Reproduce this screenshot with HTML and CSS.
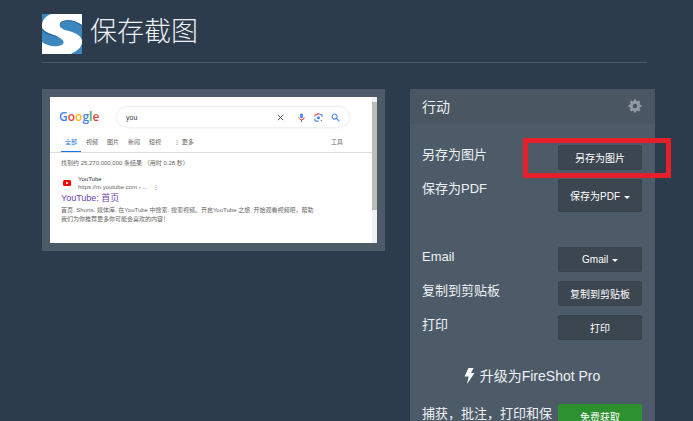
FILE: index.html
```html
<!DOCTYPE html>
<html lang="zh-CN">
<head>
  <meta charset="utf-8">
  <title>保存截图</title>
  <link rel="stylesheet" href="styles.css">
</head>
<body>
  <header class="page-header">
    <svg class="logo" viewBox="0 0 40 40">
      <rect width="40" height="40" fill="#fff"/>
      <path d="M0 0H9C4 2 1 5 0 10Z" fill="#3d87c0"/>
      <path d="M40 11C33 6 24 5 19 8C16 11 18 14 23 16C31 18 38 20 40 26Z" fill="#3d87c0"/>
      <path d="M0 14C4 20 12 20 18 24C24 28 22 31 16 32C10 33 4 31 0 28Z" fill="#3d87c0"/>
      <path d="M40 29V40H29C35 37 39 34 40 29Z" fill="#3d87c0"/>
      <path d="M18 10C22 5 33 6 40 13V11C33 6 24 5 19 8ZM0 14C4 20 12 20 18 24C13 22 4 22 0 16Z" fill="#2f6c9f"/>
    </svg>
    <h1>保存截图</h1>
  </header>

  <main class="content">
    <section class="preview">
      <div class="shot">
        <div class="shot-page">
          <div class="shot-search">
            <div class="google"><span class="b">G</span><span class="r">o</span><span class="y">o</span><span class="b">g</span><span class="g">l</span><span class="r">e</span></div>
            <div class="search-box">
              <span class="query">you</span>
              <svg class="icon" viewBox="0 0 10 10"><path d="M2 2L8 8M8 2L2 8" stroke="#555" stroke-width="1.1"/></svg>
              <svg class="icon icon-mic" viewBox="0 0 10 10"><rect x="3.5" y="0.5" width="3" height="5.5" rx="1.5" fill="#4285f4"/><path d="M2 4.5A3 3 0 0 0 5 7.6" stroke="#d9773a" fill="none"/><path d="M8 4.5A3 3 0 0 1 5 7.6" stroke="#ea4335" fill="none"/><path d="M5 7.500V10" stroke="#4c8a8a" stroke-width="1.200"/></svg>
              <svg class="icon" viewBox="0 0 10 10" fill="none" stroke-width="1.2"><path d="M1 4V2.8Q1 2 2 2H3L4 1H6" stroke="#ea4335"/><path d="M6 1L7 2H8Q9 2 9 3V4.5" stroke="#4285f4"/><path d="M1 6V8Q1 9 2 9H5" stroke="#4285f4"/><circle cx="5" cy="5.3" r="1.7" fill="#4285f4"/><circle cx="8.2" cy="8.3" r=".8" fill="#34a853"/></svg>
              <svg class="icon" viewBox="0 0 10 10" fill="none" stroke="#4285f4" stroke-width="1.2"><circle cx="4" cy="4" r="2.8"/><path d="M6 6L9.3 9.3"/></svg>
            </div>
          </div>
          <nav class="tabs">
            <a href="#" class="active">全部</a>
            <a href="#">视频</a>
            <a href="#">图片</a>
            <a href="#">新闻</a>
            <a href="#">短视</a>
            <a href="#" class="more">⋮ 更多</a>
            <a href="#" class="tools">工具</a>
          </nav>
          <div class="results">
            <p class="stats">找到约 25,270,000,000 条结果 （用时 0.28 秒）</p>
            <div class="site">
              <svg class="yt" viewBox="0 0 8 8"><rect y="1" width="8" height="6" rx="1.5" fill="#e00"/><path d="M3.2 2.6L5.6 4L3.2 5.4Z" fill="#fff"/></svg>
              <div>
                <p class="site-name">YouTube</p>
                <p class="site-url">https://m.youtube.com › ... <span class="dots">⋮</span></p>
              </div>
            </div>
            <a href="#" class="result-title">YouTube: 首页</a>
            <p class="desc">首页. Shorts. 媒体库. 在YouTube 中搜索. 搜索视频。开启YouTube 之旅. 开始观看视频吧，帮助<br>我们为你推荐更多你可能会喜欢的内容！</p>
          </div>
        </div>
        <div class="scrollbar"><div class="thumb"></div></div>
      </div>
    </section>

    <section class="actions">
      <div class="actions-header">
        <h2>行动</h2>
        <svg class="gear" viewBox="0 0 16 16"><g fill="#919aa3"><circle cx="8" cy="8" r="5.6"/><path id="tooth" d="M6.3 3L6.8 .5H9.2L9.7 3V13L9.2 15.5H6.8L6.3 13Z"/><use href="#tooth" transform="rotate(45 8 8)"/><use href="#tooth" transform="rotate(90 8 8)"/><use href="#tooth" transform="rotate(135 8 8)"/></g><circle cx="8" cy="8" r="2.7" fill="#4a5662"/></svg>
      </div>
      <div class="actions-body">
        <div class="row highlighted">
          <label for="save-image">另存为图片</label>
          <button id="save-image">另存为图片</button>
        </div>
        <div class="row row-pdf">
          <label for="save-pdf">保存为PDF</label>
          <button id="save-pdf" class="tall">保存为PDF <span class="caret"></span></button>
        </div>
        <div class="row">
          <label for="email">Email</label>
          <button id="email">Gmail <span class="caret"></span></button>
        </div>
        <div class="row">
          <label for="copy">复制到剪贴板</label>
          <button id="copy">复制到剪贴板</button>
        </div>
        <div class="row">
          <label for="print">打印</label>
          <button id="print">打印</button>
        </div>
        <h3 class="upgrade">
          <svg class="bolt" viewBox="0 0 10 16"><path d="M4 0H9L6.5 5H10L2.5 16L4.2 8.5H0Z" fill="#fff"/></svg>
          升级为FireShot Pro
        </h3>
        <div class="row">
          <label for="get-pro">捕获，批注，打印和保存</label>
          <button id="get-pro" class="green">免费获取</button>
        </div>
      </div>
    </section>
  </main>
</body>
</html>
```
FILE: styles.css
```css
* {
  box-sizing: border-box;
}
body {
  margin: 0;
  height: 100vh;
  overflow: hidden;
  padding: 12px 38px 0 42px;
  background: #2c3c4d;
  color: #eef1f4;
  font-family: "Liberation Sans", "Noto Sans CJK SC", sans-serif;
  font-size: 13px;
}
h1, h2, h3, p {
  margin: 0;
  font-weight: normal;
}
a {
  color: inherit;
  text-decoration: none;
}

.page-header {
  display: flex;
  gap: 8px;
  height: 51px;
  margin-right: 8px;
  border-bottom: 1px solid #4a5a6b;
}
.logo {
  width: 40px;
  height: 40px;
  margin-top: 2px;
}
.page-header h1 {
  font-size: 27px;
  font-weight: 300;
  line-height: 40px;
}

.content {
  display: flex;
  align-items: flex-start;
  gap: 25px;
  margin-top: 26px;
}

/* screenshot preview */
.preview {
  flex: 1;
  min-width: 0;
  padding: 8px;
  background: #4d5b69;
}
.shot {
  display: flex;
  height: 146px;
  background: #fff;
  color: #666;
  font-size: 6px;
  line-height: 9px;
  white-space: nowrap;
  overflow: hidden;
}
.shot-page {
  flex: 1;
  min-width: 0;
}
.shot-search {
  display: flex;
  align-items: center;
  gap: 19px;
  padding: 10px 23px 0 9px;
}
.google {
  font-family: "Open Sans", sans-serif;
  font-size: 12px;
  font-weight: 600;
  line-height: 20px;
  width: 39px;
}
.b { color: #4285f4; }
.r { color: #ea4335; }
.y { color: #fbbc05; }
.g { color: #34a853; }
.search-box {
  flex: 1;
  display: flex;
  align-items: center;
  gap: 8px;
  height: 20px;
  padding: 0 9px 0 9px;
  border-radius: 10px;
  box-shadow: 0 0 3px #d4d6d9;
}
.query {
  flex: 1;
  color: #333;
  font-size: 7px;
}
.icon {
  width: 9px;
  height: 9px;
}
.icon-mic {
  margin-left: 4px;
}
.tabs {
  display: flex;
  gap: 9px;
  margin-top: 11px;
  padding: 0 29px 0 15px;
  border-bottom: 1px solid #ddd;
}
.tabs a {
  height: 14px;
}
.tabs .active {
  margin-left: -4px;
  margin-right: -4px;
  padding: 0 4px;
  color: #1a73e8;
  border-bottom: 1px solid #1a73e8;
}
.tabs .more {
  margin-left: 4px;
}
.tabs .tools {
  margin-left: auto;
}
.results {
  padding: 6px 11px;
}
.site {
  display: flex;
  align-items: center;
  gap: 7px;
  margin-top: 7px;
  padding-left: 2px;
  line-height: 8px;
}
.yt {
  width: 8px;
  height: 8px;
}
.site-name {
  color: #333;
}
.dots {
  margin-left: 4px;
}
.result-title {
  display: block;
  color: #6b3fb0;
  font-size: 9px;
  line-height: 15px;
}

.scrollbar {
  width: 5px;
  padding-top: 5px;
  background: #f1f1f1;
}
.thumb {
  height: 108px;
  background: #bbbdbb;
}

/* actions panel */
.actions {
  width: 245px;
  background: #4d5b69;
}
.actions-header {
  display: flex;
  align-items: center;
  justify-content: space-between;
  height: 35px;
  padding: 0 13px 2px 12px;
  background: #4a5662;
}
.actions-header h2 {
  font-size: 14px;
}
.gear {
  width: 14px;
  height: 14px;
}
.actions-body {
  display: flex;
  flex-direction: column;
  gap: 9px;
  padding: 21px 13px 21px 12px;
}
.row {
  position: relative;
  display: flex;
  justify-content: space-between;
  align-items: flex-start;
}
.row label {
  width: 132px;
  line-height: 19px;
}
.row-pdf {
  margin-bottom: 26px;
}
.row button {
  width: 84px;
  height: 25px;
  padding: 0;
  border: 1px solid #38424d;
  border-radius: 2px;
  background: #3c4650;
  color: #fff;
  font-family: inherit;
  font-size: 10px;
}
.row .tall {
  height: 33px;
}
.row .green {
  border-color: #2d912f;
  background: #2d912f;
}
.caret {
  display: inline-block;
  margin-left: 1px;
  border: 3px solid transparent;
  border-top-color: #fff;
  border-bottom: 0;
  vertical-align: middle;
}
.highlighted::after {
  content: "";
  position: absolute;
  inset: -7px -29px -8px 101px;
  border: 5px solid #e5202b;
  pointer-events: none;
}
.upgrade {
  display: flex;
  align-items: center;
  justify-content: center;
  gap: 5px;
  margin: 17px 0 9px;
  font-size: 14px;
  line-height: 20px;
}
.bolt {
  width: 11px;
  height: 16px;
}
```
